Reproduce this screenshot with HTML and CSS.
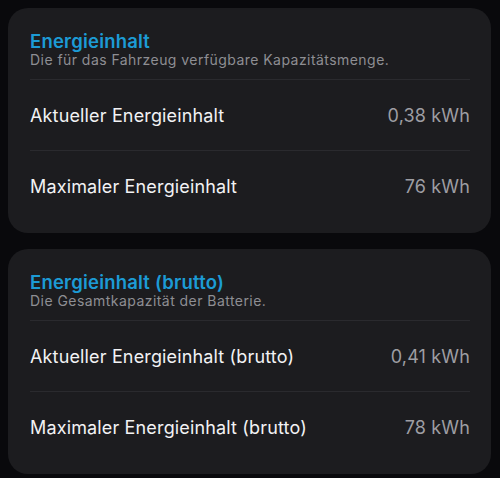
FILE: index.html
```html
<!DOCTYPE html>
<html lang="de">
<head>
  <meta charset="UTF-8" />
  <meta name="viewport" content="width=device-width, initial-scale=1.0" />
  <title>Energieinhalt</title>
  <link rel="stylesheet" href="styles.css">
</head>
<body>
  <section class="card">
    <div class="card-head">
      <h2>Energieinhalt</h2>
      <p>Die für das Fahrzeug verfügbare Kapazitätsmenge.</p>
    </div>
    <div class="row">
      <span>Aktueller Energieinhalt</span>
      <span class="value">0,38 kWh</span>
    </div>
    <div class="row">
      <span>Maximaler Energieinhalt</span>
      <span class="value">76 kWh</span>
    </div>
  </section>

  <section class="card">
    <div class="card-head">
      <h2>Energieinhalt (brutto)</h2>
      <p>Die Gesamtkapazität der Batterie.</p>
    </div>
    <div class="row">
      <span>Aktueller Energieinhalt (brutto)</span>
      <span class="value">0,41 kWh</span>
    </div>
    <div class="row">
      <span>Maximaler Energieinhalt (brutto)</span>
      <span class="value">78 kWh</span>
    </div>
  </section>
</body>
</html>
```

FILE: styles.css
```css
body {
  margin: 0;
  padding: 8px 9px 0 8px;
  background: #09090c;
  font-family: Inter, "Noto Sans", sans-serif;
  color: #f2f2f4;
}

.card {
  background: #1c1c1f;
  border-radius: 20px;
  padding: 22px 21px 12px 22px;
  margin-bottom: 16px;
}

.card-head {
  padding-bottom: 11px;
}

.card-head h2 {
  margin: 0;
  font-size: 18.5px;
  line-height: 22px;
  font-weight: 600;
  letter-spacing: 0.2px;
  color: #1c9bd5;
}

.card-head p {
  margin: 0;
  font-size: 14px;
  line-height: 16px;
  letter-spacing: 0.45px;
  color: #8e8e93;
}

.row {
  display: flex;
  justify-content: space-between;
  align-items: center;
  height: 70px;
  border-top: 1px solid #2a2a2e;
  font-size: 18px;
  letter-spacing: 0.15px;
}

.value {
  color: #9e9ea3;
}
```
